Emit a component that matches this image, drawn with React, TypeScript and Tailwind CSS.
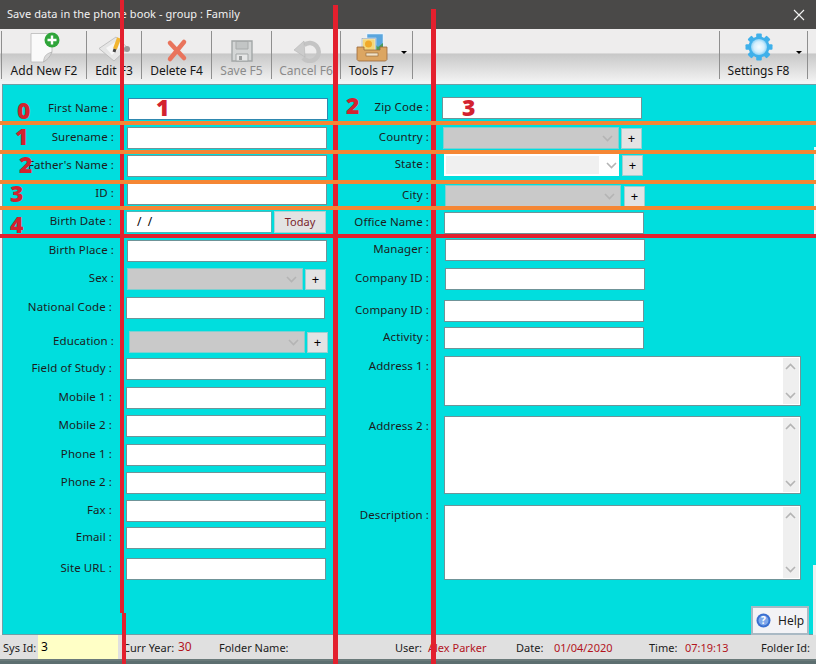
import React from "react";

const inputBorder = "border border-[#6f9498]";

function Chevron({ up = false, cls = "" }: { up?: boolean; cls?: string }) {
  return (
    <svg width="11" height="7" viewBox="0 0 11 7" className={cls}>
      <path d={up ? "M1 6 L5.5 1.5 L10 6" : "M1 1 L5.5 5.5 L10 1"} fill="none" stroke="#b4b4b4" strokeWidth="1.6" />
    </svg>
  );
}

function TextBox({ cls }: { cls: string }) {
  return <input readOnly className={`h-[22px] bg-white outline-none ${inputBorder} ${cls}`} />;
}

function Plus({ cls }: { cls: string }) {
  return (
    <div className={`flex h-[21px] w-[21px] shrink-0 items-center justify-center border border-[#9ccfd0] bg-[#e3e3e3] text-[13px] leading-none text-black ${cls}`}>
      +
    </div>
  );
}

function Combo({ cls, plusCls, white = false }: { cls: string; plusCls: string; white?: boolean }) {
  return (
    <>
      {white ? (
        <div className={`flex h-[22px] w-[175px] items-center border-2 border-white bg-white ${cls}`}>
          <div className="h-full w-[153px] bg-[#f0f0f0]" />
          <Chevron cls="ml-[7px]" />
        </div>
      ) : (
        <div className={`flex h-[22px] w-[176px] items-center justify-end border border-[#7fd0d0] bg-[#c9c9c9] pr-[5px] ${cls}`}>
          <Chevron />
        </div>
      )}
      <Plus cls={plusCls} />
    </>
  );
}

function Row({ label, cls = "", labelCls = "", width, children }: { label: string; cls?: string; labelCls?: string; width: string; children: React.ReactNode }) {
  return (
    <div className={`flex items-center ${cls}`}>
      <div className={`shrink-0 pb-[2px] text-right whitespace-nowrap text-[11.5px] tracking-[0.1px] ${width} ${labelCls}`}>{label}</div>
      {children}
    </div>
  );
}

function Memo({ cls }: { cls: string }) {
  return (
    <div className={`flex w-[357px] justify-end border border-[#6f9498] bg-white py-[1px] pr-[1px] ${cls}`}>
      <div className="flex w-[16px] flex-col items-center justify-between bg-[#efefef] py-[5px] pr-[2px]">
        <Chevron up />
        <Chevron />
      </div>
    </div>
  );
}

function Tool({ label, width, disabled = false, arrow = false, children }: { label: string; width: string; disabled?: boolean; arrow?: boolean; children: React.ReactNode }) {
  return (
    <div className={`relative flex h-[48px] shrink-0 flex-col items-center border-r border-[#8f8f8f] ${width} ${disabled ? "text-[#8b8b8b]" : "text-[#161616]"}`}>
      <div className="h-[32px] w-[32px]">{children}</div>
      <div className="mt-[1px] whitespace-nowrap leading-[14px]">{label}</div>
      {arrow && <div className="absolute right-[5px] top-[20px] h-0 w-0 border-x-[3px] border-t-[3px] border-x-transparent border-t-black" />}
    </div>
  );
}

const AddIcon = () => (
  <svg width="32" height="32" viewBox="0 0 32 32">
    <path d="M3 2.5 H24 V21 L15.5 31 H3 Z" fill="#fafafa" stroke="#b9b9b9" strokeWidth="0.8" />
    <path d="M15.5 31 C16 26 17 23 24 21 C22 26 19 29 15.5 31Z" fill="#d9d9d9" stroke="#a8a8a8" strokeWidth="0.6" />
    <circle cx="24" cy="9" r="7.5" fill="#2fa53a" />
    <path d="M24 4.5 V13.5 M19.5 9 H28.5" stroke="#fff" strokeWidth="2.4" />
  </svg>
);
const EditIcon = () => (
  <svg width="32" height="32" viewBox="0 0 32 32">
    <path d="M1 17.5 L18 6 L30 17 L16 30 Z" fill="#e6e6e6" stroke="#b8b8b8" strokeWidth="0.8" />
    <path d="M8 17 L19 10 L24 15 L14 24 Z" fill="#f7f7f7" />
    <path d="M21 7 L17 18" stroke="#f2b632" strokeWidth="4" />
    <path d="M17 18 L16 21" stroke="#444" strokeWidth="3" />
    <circle cx="29" cy="18" r="3" fill="#9a9a9a" />
  </svg>
);
const DeleteIcon = () => (
  <svg width="32" height="32" viewBox="0 0 32 32">
    <path d="M9 12 L23 27 M23 11 L9 28" stroke="#e9745c" strokeWidth="4.5" strokeLinecap="round" />
  </svg>
);
const SaveIcon = () => (
  <svg width="32" height="32" viewBox="0 0 32 32">
    <path d="M6 10 H26 V30 H6 Z" fill="#d4d6d6" stroke="#a3a7a7" strokeWidth="1.4" />
    <path d="M10 10.5 H22 V18 H10 Z" fill="#c2c5c5" stroke="#a8abab" />
    <path d="M10 23 H22 V30 H10 Z" fill="#e6e7e7" stroke="#a3a7a7" />
    <rect x="13" y="25" width="3" height="4" fill="#9a9d9d" />
  </svg>
);
const CancelIcon = () => (
  <svg width="32" height="32" viewBox="0 0 32 32">
    <path d="M13 27 A9 9 0 1 0 14 14" fill="none" stroke="#c4c4c4" strokeWidth="4.5" />
    <path d="M4 19 L14 10 L15 26 Z" fill="#cccccc" stroke="#b6b6b6" strokeWidth="0.6" />
  </svg>
);
const ToolsIcon = () => (
  <svg width="32" height="32" viewBox="0 0 32 32">
    <rect x="10.5" y="2.5" width="17" height="18" fill="#5aa6de" stroke="#e9f2fa" strokeWidth="1.5" />
    <path d="M11 19 L17 11 L22 16 L27 12 V20 H11Z" fill="#4b9b5a" />
    <rect x="6" y="7.5" width="13.5" height="13.5" fill="#f4d77a" stroke="#f4f4f4" strokeWidth="1.5" />
    <rect x="6" y="7.5" width="13.5" height="13.5" fill="none" stroke="#7e95a8" strokeWidth="0.5" />
    <circle cx="12.5" cy="13" r="3.5" fill="#f0a929" />
    <path d="M1 16 H8 V19 H24 V16 H31 V28.5 L29.5 30 H2.5 L1 28.5Z" fill="#dca662" stroke="#99683a" strokeWidth="0.8" />
    <rect x="10" y="22" width="12" height="3" fill="#f2e3c8" stroke="#8a6136" strokeWidth="0.6" />
  </svg>
);
const GearIcon = () => (
  <svg width="32" height="32" viewBox="0 0 32 32">
    <defs>
      <radialGradient id="gearCore" cx="50%" cy="50%" r="50%">
        <stop offset="0%" stopColor="#f6fcff" />
        <stop offset="65%" stopColor="#d4eefc" />
        <stop offset="100%" stopColor="#8fd3f6" />
      </radialGradient>
    </defs>
    <g fill="#3fb0ea">
      {[0, 45, 90, 135, 180, 225, 270, 315].map((a) => (
        <rect key={a} x="13.2" y="2.5" width="5.6" height="7" rx="1" transform={`rotate(${a} 16 16)`} />
      ))}
    </g>
    <circle cx="16" cy="16" r="10.5" fill="#3fb0ea" />
    <circle cx="16" cy="16" r="8" fill="url(#gearCore)" />
  </svg>
);

const bars = [
  "left-[120px] top-0 h-[613px] w-[4px]",
  "left-[122px] top-[613px] h-[51px] w-[4px]",
  "left-[333px] top-[5px] h-[659px] w-[5px]",
  "left-[431px] top-[9px] h-[655px] w-[5px]",
];
const stripes = ["top-[121px]", "top-[150px]", "top-[180px]", "top-[206px]"];
const numbers: [string, string][] = [
  ["0", "left-[17px] top-[95px]"],
  ["1", "left-[15px] top-[121px]"],
  ["2", "left-[19px] top-[149px]"],
  ["3", "left-[10px] top-[178px]"],
  ["4", "left-[10px] top-[209px]"],
  ["1", "left-[156px] top-[92px]"],
  ["2", "left-[346px] top-[90px]"],
  ["3", "left-[462px] top-[92px]"],
];

export default function App() {
  const lw = "w-[111px]";
  const rw = "w-[90px] pr-[1px]";
  return (
    <div className="relative flex h-[664px] w-[816px] flex-col overflow-hidden bg-[#f2f4f5] font-['Noto_Sans',sans-serif] text-[12px] text-[#1c1c1c]">
      <div className="flex h-[29px] shrink-0 items-center justify-between bg-[#4a4948] pl-[7px] pr-[11px] text-[#f2f2f2]">
        <span className="whitespace-nowrap text-[11px] tracking-[0.07px]">Save data in the phone book - group : Family</span>
        <svg width="12" height="12" viewBox="0 0 12 12">
          <path d="M1 1 L11 11 M11 1 L1 11" stroke="#f4f4f4" strokeWidth="1.1" />
        </svg>
      </div>

      <div className="h-[52px] shrink-0 bg-[linear-gradient(#eeeded_0,#eeeded_46%,#c8c8c8_48%,#f1f1f1_100%)] pl-[1px] pt-[2px]">
        <div className="flex">
          <div className="h-[48px] border-l border-[#8f8f8f]" />
          <Tool label="Add New F2" width="w-[85px]"><AddIcon /></Tool>
          <Tool label="Edit F3" width="w-[55px]"><EditIcon /></Tool>
          <Tool label="Delete F4" width="w-[70px]"><DeleteIcon /></Tool>
          <Tool label="Save F5" width="w-[60px]" disabled><SaveIcon /></Tool>
          <Tool label="Cancel F6" width="w-[69px]" disabled><CancelIcon /></Tool>
          <Tool label="Tools F7" width="w-[72px] pr-[10px]" arrow><ToolsIcon /></Tool>
          <div className="w-[307px] shrink-0 border-r border-[#8f8f8f]" />
          <Tool label="Settings F8" width="w-[88px] pr-[10px]" arrow><GearIcon /></Tool>
        </div>
      </div>

      <div className="ml-[2px] mt-[3px] flex h-[551px] shrink-0 border border-[#6f9fa6] border-r-0 bg-[#00dede]">
        <div className="w-[337px] shrink-0 pt-[13px]">
          <Row label="First Name :" width={lw} cls="h-[22px]"><input readOnly className="ml-[14px] h-[22px] w-[200px] border border-[#2f88b0] bg-white outline-none" /></Row>
          <Row label="Surename :" width={lw} cls="mt-[7px] h-[22px]"><TextBox cls="ml-[13px] w-[200px]" /></Row>
          <Row label="Father's Name :" width={lw} cls="mt-[6px] h-[22px]"><TextBox cls="ml-[13px] w-[200px]" /></Row>
          <Row label="ID :" width={lw} cls="mt-[6px] h-[22px]"><TextBox cls="ml-[13px] w-[200px]" /></Row>
          <Row label="Birth Date :" width={lw} labelCls="pr-[2px]" cls="mt-[6px] h-[22px]">
            <div className="ml-[12px] flex h-[22px] w-[146px] items-center border border-[#4fb6b8] bg-white pl-[10px] text-black">/&nbsp;&nbsp;/</div>
            <div className="ml-[2px] flex h-[22px] w-[52px] items-center justify-center border border-[#a9d4d4] bg-[#e3e3e3] text-[11px] text-[#7a1f2b]">Today</div>
          </Row>
          <Row label="Birth Place :" width={lw} cls="mt-[7px] h-[22px]"><TextBox cls="ml-[13px] w-[200px]" /></Row>
          <Row label="Sex :" width={lw} cls="mt-[6px] h-[22px]"><Combo cls="ml-[13px]" plusCls="ml-[2px]" /></Row>
          <Row label="National Code :" width={lw} labelCls="pr-[2px]" cls="mt-[7px] h-[22px]"><TextBox cls="ml-[12px] w-[199px]" /></Row>
          <Row label="Education :" width={lw} cls="mt-[12px] h-[22px]"><Combo cls="ml-[15px]" plusCls="ml-[2px]" /></Row>
          <Row label="Field of Study :" width={lw} labelCls="pr-[2px]" cls="mt-[5px] h-[22px]"><TextBox cls="ml-[12px] w-[200px]" /></Row>
          <Row label="Mobile 1 :" width={lw} labelCls="pr-[2px]" cls="mt-[7px] h-[22px]"><TextBox cls="ml-[12px] w-[200px]" /></Row>
          <Row label="Mobile 2 :" width={lw} labelCls="pr-[2px]" cls="mt-[6px] h-[22px]"><TextBox cls="ml-[12px] w-[200px]" /></Row>
          <Row label="Phone 1 :" width={lw} labelCls="pr-[2px]" cls="mt-[7px] h-[22px]"><TextBox cls="ml-[12px] w-[200px]" /></Row>
          <Row label="Phone 2 :" width={lw} labelCls="pr-[2px]" cls="mt-[6px] h-[22px]"><TextBox cls="ml-[12px] w-[200px]" /></Row>
          <Row label="Fax :" width={lw} labelCls="pr-[2px]" cls="mt-[6px] h-[22px]"><TextBox cls="ml-[12px] w-[200px]" /></Row>
          <Row label="Email :" width={lw} labelCls="pr-[2px]" cls="mt-[5px] h-[22px]"><TextBox cls="ml-[12px] w-[200px]" /></Row>
          <Row label="Site URL :" width={lw} labelCls="pr-[2px]" cls="mt-[9px] h-[22px]"><TextBox cls="ml-[12px] w-[200px]" /></Row>
        </div>
        <div className="flex-1 pt-[12px]">
          <Row label="Zip Code :" width={rw} cls="h-[22px]"><TextBox cls="ml-[12px] w-[200px]" /></Row>
          <Row label="Country :" width={rw} cls="mt-[8px] h-[22px]"><Combo cls="ml-[13px]" plusCls="ml-[2px]" /></Row>
          <Row label="State :" width={rw} cls="mt-[5px] h-[22px]"><Combo white cls="ml-[14px]" plusCls="ml-[3px]" /></Row>
          <Row label="City :" width={rw} cls="mt-[9px] h-[22px]"><Combo cls="ml-[15px]" plusCls="ml-[3px]" /></Row>
          <Row label="Office Name :" width={rw} cls="mt-[5px] h-[22px]"><TextBox cls="ml-[14px] w-[200px]" /></Row>
          <Row label="Manager :" width={rw} cls="mt-[5px] h-[22px]"><TextBox cls="ml-[15px] w-[200px]" /></Row>
          <Row label="Company ID :" width={rw} cls="mt-[7px] h-[22px]"><TextBox cls="ml-[15px] w-[200px]" /></Row>
          <Row label="Company ID :" width={rw} cls="mt-[10px] h-[22px]"><TextBox cls="ml-[14px] w-[200px]" /></Row>
          <Row label="Activity :" width={rw} cls="mt-[5px] h-[22px]"><TextBox cls="ml-[14px] w-[200px]" /></Row>
          <Row label="Address 1 :" width={rw} labelCls="self-start pt-[1px]" cls="mt-[7px] h-[50px]"><Memo cls="ml-[14px] h-[50px]" /></Row>
          <Row label="Address 2 :" width={rw} labelCls="self-start pt-[1px]" cls="mt-[10px] h-[78px]"><Memo cls="ml-[14px] h-[78px]" /></Row>
          <Row label="Description :" width={rw} labelCls="self-start pt-[1px]" cls="mt-[11px] h-[75px]"><Memo cls="ml-[14px] h-[75px]" /></Row>
        </div>
      </div>

      <div className="flex h-[26px] shrink-0 items-center border-b-2 border-[#6a7a7a] bg-[#e0e0e0] text-[11px] leading-none">
        <div className="w-[38px] shrink-0 whitespace-nowrap pl-[3px]">Sys Id:</div>
        <div className="flex h-full w-[80px] shrink-0 items-center bg-[#ffffc6] pl-[3px] text-[12px] text-black">3</div>
        <div className="ml-[5px] w-[55px] shrink-0 whitespace-nowrap">Curr Year:</div>
        <div className="w-[41px] shrink-0 text-[12px] text-[#b3141d]">30</div>
        <div className="w-[176px] shrink-0 whitespace-nowrap">Folder Name:</div>
        <div className="w-[33px] shrink-0">User:</div>
        <div className="w-[88px] shrink-0 whitespace-nowrap text-[#b3141d]">Alex Parker</div>
        <div className="w-[38px] shrink-0">Date:</div>
        <div className="w-[95px] shrink-0 text-[#b3141d]">01/04/2020</div>
        <div className="w-[36px] shrink-0">Time:</div>
        <div className="w-[76px] shrink-0 text-[#b3141d]">07:19:13</div>
        <div className="w-[55px] shrink-0 whitespace-nowrap">Folder Id:</div>
      </div>
      <div className="flex-1 bg-[#5d6f70]" />

      <div className="absolute right-[7px] top-[606px] flex h-[29px] w-[58px] items-center gap-[7px] border-2 border-[#a9b9c4] bg-[#f3f3f6] pl-[3px]">
        <svg width="15" height="15" viewBox="0 0 15 15">
          <circle cx="7.5" cy="7.5" r="7" fill="#3a6fd0" />
          <circle cx="7.5" cy="7.5" r="5" fill="#7ea8ea" />
          <text x="7.5" y="11" textAnchor="middle" fontSize="10" fontWeight="700" fill="#fff">?</text>
        </svg>
        Help
      </div>

      <div className="absolute left-[814px] top-[147px] h-[88px] w-[2px] bg-[#eef4f4]" />
      <div className="absolute left-[813px] top-[565px] h-[70px] w-[3px] bg-[#eef0f0]" />

      {bars.map((b) => (
        <div key={b} className={`absolute bg-[#e3202e] ${b}`} />
      ))}
      {stripes.map((s) => (
        <div key={s} className={`absolute left-0 h-[4px] w-[816px] bg-[#f58634] ${s}`} />
      ))}
      <div className="absolute left-0 top-[234px] h-[4px] w-[816px] bg-[#e3202e]" />
      {numbers.map(([n, c]) => (
        <div key={c} className={`absolute font-['Open_Sans',sans-serif] text-[23px] leading-[30px] font-extrabold text-[#d3222f] ${c}`}>
          {n}
        </div>
      ))}
    </div>
  );
}
